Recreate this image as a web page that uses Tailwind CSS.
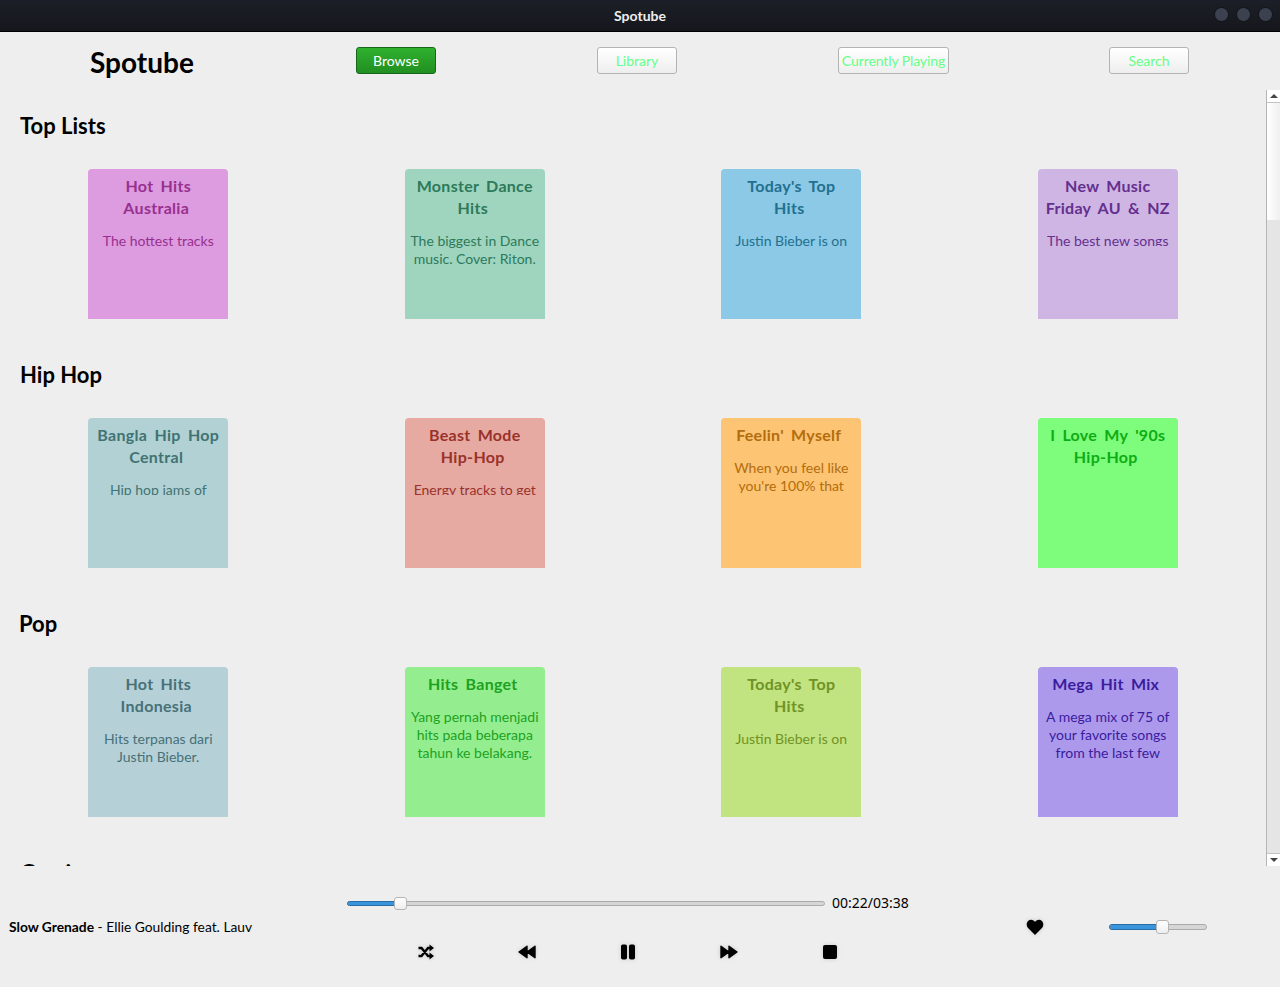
<!DOCTYPE html>
<html class="bg-[#eeeeee]">
<head>
  <meta charset="utf-8">
  <title>Spotube</title>
  <script src="https://cdn.jsdelivr.net/npm/@tailwindcss/browser@4"></script>
</head>
<body class="h-[987px] w-[1280px] overflow-hidden bg-[#eeeeee] font-['Lato','Noto_Sans',sans-serif] text-black">
  <!-- title bar -->
  <div class="relative flex h-[32px] items-center justify-center border-b border-black bg-gradient-to-b from-[#1c1f27] to-[#15171c]">
    <span class="text-[14px] font-bold text-[#eeeeee]">Spotube</span>
    <div class="absolute right-[7px] top-[7px] flex gap-[7px]">
      <span class="size-[15px] rounded-full border border-[#101216] bg-[#3c4150]"></span>
      <span class="size-[15px] rounded-full border border-[#101216] bg-[#3c4150]"></span>
      <span class="size-[15px] rounded-full border border-[#101216] bg-[#3c4150]"></span>
    </div>
  </div>

  <!-- nav -->
  <div class="flex h-[58px] items-center gap-[161px] pb-px pl-[90px]">
    <h1 class="mt-[2px] w-[105px] whitespace-nowrap text-[28px] font-bold leading-none">Spotube</h1>
    <button class="h-[27px] w-[80px] rounded-[3px] border border-[#17661c] bg-gradient-to-b from-[#2fb12f] to-[#218f21] text-[14px] text-white">Browse</button>
    <button class="h-[27px] w-[80px] rounded-[3px] border border-[#b3b3b3] bg-gradient-to-b from-white to-[#eeeeee] text-[14px] text-[#66ff88]">Library</button>
    <button class="h-[27px] w-[111px] whitespace-nowrap rounded-[3px] border border-[#b3b3b3] bg-gradient-to-b from-white to-[#eeeeee] text-[14px] tracking-[-0.1px] text-[#66ff88]">Currently Playing</button>
    <button class="-ml-px h-[27px] w-[80px] rounded-[3px] border border-[#b3b3b3] bg-gradient-to-b from-white to-[#eeeeee] text-[14px] text-[#66ff88]">Search</button>
  </div>

  <!-- scrolling list -->
  <div class="flex h-[776px] overflow-hidden">
    <div class="w-[1266px]">
      <section class="pb-5 pt-5">
        <h2 class="mb-[27px] h-[32px] pl-[20px] text-[22px] font-bold leading-[32px]">Top Lists</h2>
        <div class="grid grid-cols-4 justify-items-center">
          <div class="h-[150px] w-[140px] overflow-hidden whitespace-nowrap rounded-t-[4px] bg-[#dd9be0] pt-[6px] text-center text-[#97308f]">
            <p class="text-[16px] font-bold leading-[22px] tracking-[0.3px] [word-spacing:3px]">Hot Hits<br><span class="pr-1">Australia</span></p>
            <p class="mt-[13px] h-[14px] overflow-hidden text-[14px] leading-[18px]">The hottest tracks</p>
          </div>
          <div class="h-[150px] w-[140px] overflow-hidden whitespace-nowrap rounded-t-[4px] bg-[#9fd4bf] pt-[6px] text-center text-[#2c7a5a]">
            <p class="text-[16px] font-bold leading-[22px] tracking-[0.3px] [word-spacing:3px]">Monster Dance<br><span class="pr-1">Hits</span></p>
            <p class="mt-[13px] text-[14px] leading-[18px]">The biggest in Dance<br>music. Cover: Riton.</p>
          </div>
          <div class="h-[150px] w-[140px] overflow-hidden whitespace-nowrap rounded-t-[4px] bg-[#8bc9e6] pt-[6px] text-center text-[#22708f]">
            <p class="text-[16px] font-bold leading-[22px] tracking-[0.3px] [word-spacing:3px]">Today's Top<br><span class="pr-1">Hits</span></p>
            <p class="mt-[13px] h-[14px] overflow-hidden text-[14px] leading-[18px]">Justin Bieber is on</p>
          </div>
          <div class="h-[150px] w-[140px] overflow-hidden whitespace-nowrap rounded-t-[4px] bg-[#cfb5e3] pt-[6px] text-center text-[#64308f]">
            <p class="text-[16px] font-bold leading-[22px] tracking-[0.3px] [word-spacing:3px]">New Music<br>Friday AU &amp; NZ</p>
            <p class="mt-[13px] h-[14px] overflow-hidden text-[14px] leading-[18px]">The best new songs</p>
          </div>
        </div>
      </section>

      <section class="pb-5 pt-5">
        <h2 class="mb-[27px] h-[32px] pl-[20px] text-[22px] font-bold leading-[32px]">Hip Hop</h2>
        <div class="grid grid-cols-4 justify-items-center">
          <div class="h-[150px] w-[140px] overflow-hidden whitespace-nowrap rounded-t-[4px] bg-[#b2d1d4] pt-[6px] text-center text-[#417373]">
            <p class="text-[16px] font-bold leading-[22px] tracking-[0.3px] [word-spacing:3px]">Bangla Hip Hop<br><span class="pr-1">Central</span></p>
            <p class="mt-[13px] h-[14px] overflow-hidden text-[14px] leading-[18px]">Hip hop jams of</p>
          </div>
          <div class="h-[150px] w-[140px] overflow-hidden whitespace-nowrap rounded-t-[4px] bg-[#e6aaa2] pt-[6px] text-center text-[#99322a]">
            <p class="text-[16px] font-bold leading-[22px] tracking-[0.3px] [word-spacing:3px]">Beast Mode<br><span class="pr-1">Hip-Hop</span></p>
            <p class="mt-[13px] h-[14px] overflow-hidden text-[14px] leading-[18px]">Energy tracks to get</p>
          </div>
          <div class="h-[150px] w-[140px] overflow-hidden whitespace-nowrap rounded-t-[4px] bg-[#fcc473] pt-[6px] text-center text-[#b36d0d]">
            <p class="text-[16px] font-bold leading-[22px] tracking-[0.3px] [word-spacing:3px]"><span class="pr-[5px]">Feelin' Myself</span></p>
            <p class="mt-[13px] text-[14px] leading-[18px]">When you feel like<br>you're 100% that</p>
          </div>
          <div class="h-[150px] w-[140px] overflow-hidden whitespace-nowrap rounded-t-[4px] bg-[#7efc7c] pt-[6px] text-center text-[#0dad14]">
            <p class="text-[16px] font-bold leading-[22px] tracking-[0.3px] [word-spacing:3px]">I Love My '90s<br><span class="pr-1">Hip-Hop</span></p>
          </div>
        </div>
      </section>

      <section class="pb-5 pt-5">
        <h2 class="mb-[27px] h-[32px] pl-[19px] text-[22px] font-bold leading-[32px]">Pop</h2>
        <div class="grid grid-cols-4 justify-items-center">
          <div class="h-[150px] w-[140px] overflow-hidden whitespace-nowrap rounded-t-[4px] bg-[#b5d0d7] pt-[6px] text-center text-[#477078]">
            <p class="text-[16px] font-bold leading-[22px] tracking-[0.3px] [word-spacing:3px]">Hot Hits<br><span class="pr-1">Indonesia</span></p>
            <p class="mt-[13px] text-[14px] leading-[18px]">Hits terpanas dari<br>Justin Bieber.</p>
          </div>
          <div class="h-[150px] w-[140px] overflow-hidden whitespace-nowrap rounded-t-[4px] bg-[#94ee90] pt-[6px] text-center text-[#1ea11e]">
            <p class="text-[16px] font-bold leading-[22px] tracking-[0.3px] [word-spacing:3px]"><span class="pr-1">Hits Banget</span></p>
            <p class="mt-[13px] text-[14px] leading-[18px]">Yang pernah menjadi<br>hits pada beberapa<br>tahun ke belakang.</p>
          </div>
          <div class="h-[150px] w-[140px] overflow-hidden whitespace-nowrap rounded-t-[4px] bg-[#c1e380] pt-[6px] text-center text-[#709325]">
            <p class="text-[16px] font-bold leading-[22px] tracking-[0.3px] [word-spacing:3px]">Today's Top<br><span class="pr-1">Hits</span></p>
            <p class="mt-[13px] h-[14px] overflow-hidden text-[14px] leading-[18px]">Justin Bieber is on</p>
          </div>
          <div class="h-[150px] w-[140px] overflow-hidden whitespace-nowrap rounded-t-[4px] bg-[#ad99eb] pt-[6px] text-center text-[#3a1c9e]">
            <p class="text-[16px] font-bold leading-[22px] tracking-[0.3px] [word-spacing:3px]"><span class="pr-1">Mega Hit Mix</span></p>
            <p class="mt-[13px] text-[14px] leading-[18px]">A mega mix of 75 of<br>your favorite songs<br>from the last few</p>
          </div>
        </div>
      </section>

      <section class="pt-5">
        <h2 class="h-[32px] pl-[20px] text-[22px] font-bold leading-[32px]">Gaming</h2>
      </section>
    </div>

    <!-- scrollbar -->
    <div class="flex w-[14px] flex-col border-l border-[#b5b5b5] bg-[#e5e5e5]">
      <div class="flex h-[13px] items-center justify-center border-b border-[#c4c4c4] bg-white">
        <span class="size-0 border-x-[4px] border-b-[4px] border-x-transparent border-b-[#444444]"></span>
      </div>
      <div class="h-[117px] bg-gradient-to-r from-white to-[#f0f0f0]"></div>
      <div class="flex-1"></div>
      <div class="flex h-[13px] items-center justify-center border-t border-[#c4c4c4] bg-white">
        <span class="size-0 border-x-[4px] border-t-[4px] border-x-transparent border-t-[#444444]"></span>
      </div>
    </div>
  </div>

  <!-- player -->
  <div class="flex h-[121px] items-center">
    <p class="mt-[2px] w-[347px] whitespace-nowrap pl-[9px] text-[13.8px]"><b>Slow Grenade</b> - Ellie Goulding feat. Lauv</p>

    <div class="flex w-[563px] flex-col gap-[33px] pt-[2px]">
      <div class="flex h-[16px] items-center gap-[7px]">
        <div class="relative h-[5px] w-[478px] rounded-full border border-[#aaaaaa] bg-[#d6d6d6]">
          <div class="h-full w-[49px] rounded-l-full bg-[#3a94dc] outline outline-[#2a6ea8]"></div>
          <span class="absolute left-[46px] top-[-5px] h-[13px] w-[13px] rounded-[3px] border border-[#b5b5b5] bg-gradient-to-b from-white to-[#eeeeee]"></span>
        </div>
        <span class="font-['Noto_Sans',sans-serif] text-[14px] leading-none">00:22/03:38</span>
      </div>

      <div class="flex h-[16px] justify-center pr-[2px] drop-shadow-[0_0_2px_rgba(0,0,0,0.15)]">
        <div class="flex w-[101px] justify-center">
          <svg class="size-[16px]" viewBox="0 0 16 16" fill="none" stroke="#000" stroke-width="2.4">
            <path d="M0.5 4h3l6.5 8h2.5M0.5 12h3l6.5-8h2.5"/>
            <path d="M11.5 0.5l4.5 3.5-4.5 3.5zM11.5 8.5l4.5 3.5-4.5 3.5z" fill="#000" stroke="none"/>
          </svg>
        </div>
        <div class="flex w-[101px] justify-center">
          <svg class="h-[16px] w-[18px]" viewBox="0 0 18 16" fill="#000" stroke="#000" stroke-width="1.4" stroke-linejoin="round">
            <path d="M9 2.2v11.6L1 8zM17 2.2v11.6L9 8z"/>
          </svg>
        </div>
        <div class="flex w-[101px] justify-center">
          <svg class="size-[16px]" viewBox="0 0 16 16" fill="#000">
            <rect x="1" y="0.5" width="6" height="15" rx="1.8"/>
            <rect x="9" y="0.5" width="6" height="15" rx="1.8"/>
          </svg>
        </div>
        <div class="flex w-[101px] justify-center">
          <svg class="h-[16px] w-[18px]" viewBox="0 0 18 16" fill="#000" stroke="#000" stroke-width="1.4" stroke-linejoin="round">
            <path d="M1 2.2v11.6L9 8zM9 2.2v11.6L17 8z"/>
          </svg>
        </div>
        <div class="flex w-[101px] justify-center">
          <svg class="size-[16px]" viewBox="0 0 16 16" fill="#000">
            <rect x="1" y="1" width="14" height="14" rx="2"/>
          </svg>
        </div>
      </div>
    </div>

    <div class="ml-[116px] flex w-[18px] justify-center drop-shadow-[0_0_2px_rgba(0,0,0,0.15)]">
      <svg class="size-[18px]" viewBox="0 0 16 16" fill="#000">
        <path d="M8 15L1.6 8.6C-0.2 6.6 0.4 2 4.2 1.6 6 1.5 7.2 2.4 8 3.6 8.8 2.4 10 1.5 11.8 1.6 15.6 2 16.2 6.6 14.4 8.6z"/>
      </svg>
    </div>

    <div class="relative ml-[65px] h-[6px] w-[98px] rounded-full border border-[#aaaaaa] bg-[#d6d6d6]">
      <div class="h-full w-[50px] rounded-l-full bg-[#3a94dc] outline outline-[#2a6ea8]"></div>
      <span class="absolute left-[46px] top-[-5px] h-[14px] w-[13px] rounded-[3px] border border-[#b5b5b5] bg-gradient-to-b from-white to-[#eeeeee]"></span>
    </div>
  </div>
</body>
</html>
